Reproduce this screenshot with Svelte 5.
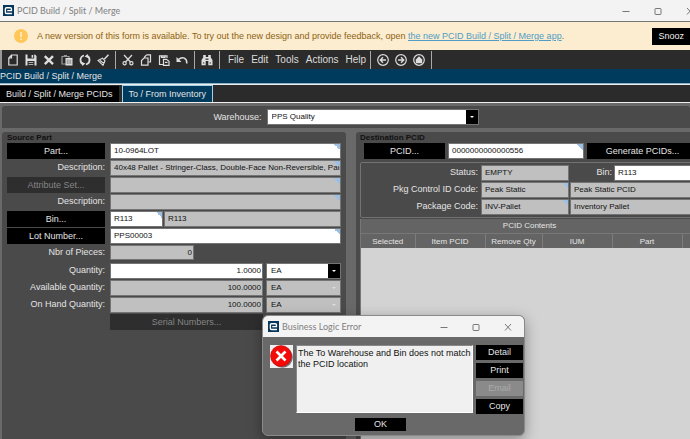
<script>
  const menus = ['File', 'Edit', 'Tools', 'Actions', 'Help'];
  const columns = ['Selected', 'Item PCID', 'Remove Qty', 'IUM', 'Part', ''];
  const amounts = [
    { id: 'qty', label: 'Quantity:', value: '1.0000', uom: 'EA', locked: false },
    { id: 'avail', label: 'Available Quantity:', value: '100.0000', uom: 'EA', locked: true },
    { id: 'onhand', label: 'On Hand Quantity:', value: '100.0000', uom: 'EA', locked: true }
  ];
</script>

{#snippet logo()}
  <svg class="logo" viewBox="0 0 12 12" aria-hidden="true">
    <rect width="12" height="12" fill="#06365a" />
    <path d="M9.8 9.3H3.9Q2.6 9.3 2.6 8V4.2Q2.6 3 3.9 3H8Q9.2 3 9.2 4.2V6.1H4.6" fill="none" stroke="#fff" stroke-width="1.5" />
  </svg>
{/snippet}

{#snippet winButtons()}
  <button aria-label="Minimize"><svg viewBox="0 0 10 10"><path d="M1.5 5.5h7" /></svg></button>
  <button aria-label="Maximize"><svg viewBox="0 0 10 10"><rect x="2" y="2.5" width="6" height="6" rx="0.6" /></svg></button>
  <button aria-label="Close"><svg viewBox="0 0 10 10"><path d="M2 2l6 6.500M8 2l-6 6.500" /></svg></button>
{/snippet}

{#snippet field(id, value, locked, lookup, extra)}
  <span class="box {extra}" class:lookup>
    <input {id} type="text" {value} readonly={locked} aria-label={id} />
  </span>
{/snippet}

<div class="window">
  <header class="titlebar">
    {@render logo()}
    <span class="title">PCID Build / Split / Merge</span>
    <div class="winbtns">{@render winButtons()}</div>
  </header>

  <div class="banner">
    <svg class="warn" viewBox="0 0 14 14" aria-hidden="true">
      <circle cx="7" cy="7" r="7" fill="#ffc757" />
      <path d="M7 3v5M7 9.500v1.700" stroke="#fcecd0" stroke-width="1.600" />
    </svg>
    <p>A new version of this form is available. To try out the new design and provide feedback, open <a href="#new">the new PCID Build / Split / Merge app</a>.</p>
    <button class="snooze">Snooz</button>
  </div>

  <nav class="toolbar">
    <button aria-label="New"><svg viewBox="0 0 12 12"><path d="M4.500 1H10.200V11H1.800V4zM4.500 1V4H1.800" /></svg></button>
    <button aria-label="Save"><svg viewBox="0 0 12 12"><path class="f" d="M.5 .5H10l1.500 1.500V11.500H.5zM2.500 .5V4.600H9.200V.5zM2.500 7V11.500H9.500V7z" fill-rule="evenodd" /><path class="f" d="M6.600 1H8.200V3.800H6.600zM3.700 8.200h4.600v.8H3.700zM3.700 10h4.600v.7H3.700z" /></svg></button>
    <button aria-label="Delete"><svg viewBox="0 0 12 12"><path d="M1.800 2.200L10 10.200M10 2.200L1.800 10.200" stroke-width="2.400" /></svg></button>
    <button aria-label="Clipboard"><svg viewBox="0 0 12 12"><path d="M1 2.500H8V10H1zM2.800 1.500h3.200" class="g" /><path class="f" d="M4.500 4H11.500V11.500H4.500z" /><path d="M6.300 5.500v4.500M8 5.500v4.500M9.700 5.500v4.500" class="g" /></svg></button>
    <button aria-label="Refresh"><svg viewBox="0 0 12 12"><path d="M5 1.500Q1.500 2.500 1.500 6T4.500 10.300M7 10.500Q10.500 9.500 10.500 6T7.500 1.700" stroke-width="1.800" /><path class="f" d="M3 8l3.400 1.500L3.200 12zM9 4L5.600 2.500 8.800 0z" /></svg></button>
    <button aria-label="Clear"><svg viewBox="0 0 12 12"><path d="M11.500 .8L7.300 5.200" stroke-width="1.500" /><path d="M1 6.500L5.500 4.200 8 6.800 6 11.300zM3 6.500l4 3" stroke-width="1.100" /></svg></button>
    <i></i>
    <button aria-label="Cut"><svg viewBox="0 0 12 12"><path d="M2 1L8.500 8M10 1L3.500 8" /><circle cx="2.600" cy="9.300" r="1.600" /><circle cx="9.400" cy="9.300" r="1.600" /></svg></button>
    <button aria-label="Copy"><svg viewBox="0 0 12 12"><path d="M6.500 .8H10.500V8H8M6.500 .8L4.500 3V4M4 4H8V11.200H1.500V6.500z" /></svg></button>
    <button aria-label="Paste"><svg viewBox="0 0 12 12"><path d="M5 10.500H1.500V1.800H9V4M3.500 1.800V3.400H7V1.800M5.500 5.300H8.500L11 7.300V11.300H5.500zM7 8.300h2.500" /></svg></button>
    <button aria-label="Undo"><svg viewBox="0 0 12 12"><path d="M2.500 5.500Q5.500 2.800 8.300 4.200T10.800 9.500" stroke-width="1.500" /><path class="f" d="M.5 3V8H5.500z" /></svg></button>
    <i></i>
    <button aria-label="Find"><svg viewBox="0 0 12 12"><path class="f" d="M2.200 1H4.800V3H7.200V1H9.800V3.500L11.500 6V11.200H7.300V7H4.700V11.200H.5V6L2.200 3.500z" /><path d="M5.200 4.500V6M6.800 4.500V6M2 9h1.300M8.700 9H10" class="d" /></svg></button>
    <i></i>
    <div class="menus">
      {#each menus as m}<button class="menu">{m}</button>{/each}
    </div>
    <i></i>
    <button aria-label="Back"><svg viewBox="0 0 12 12"><circle cx="6" cy="6" r="5.300" /><path d="M9 6H3.500M6 3.300L3.300 6 6 8.700" stroke-width="1.400" /></svg></button>
    <button aria-label="Forward"><svg viewBox="0 0 12 12"><circle cx="6" cy="6" r="5.300" /><path d="M3 6H8.500M6 3.300L8.700 6 6 8.700" stroke-width="1.400" /></svg></button>
    <button aria-label="Home"><svg viewBox="0 0 12 12"><circle cx="6" cy="6" r="5.300" /><path class="f" d="M6 2.300L9.200 5.500V9.200H2.800V5.500z" /></svg></button>
    <i></i>
  </nav>

  <h1>PCID Build / Split / Merge</h1>

  <div class="tabs">
    <button class="tab">Build / Split / Merge PCIDs</button>
    <button class="tab active">To / From Inventory</button>
  </div>

  <main>
    <section class="panel warehouse">
      <label for="wh">Warehouse:</label>
      <span class="drop wide"><select id="wh"><option>PPS Quality</option></select></span>
    </section>

    <div class="panes">
      <section class="panel source">
        <h2>Source Part</h2>
        <div class="row">
          <button class="cmd">Part...</button>
          {@render field('Part', '10-0964LOT', false, true, '')}
        </div>
        <div class="row">
          <label for="Part description">Description:</label>
          {@render field('Part description', '40x48 Pallet - Stringer-Class, Double-Face Non-Reversible, Par', true, true, '')}
        </div>
        <div class="row">
          <button class="cmd" disabled>Attribute Set...</button>
          {@render field('Attribute set', '', true, true, '')}
        </div>
        <div class="row">
          <label for="Attribute description">Description:</label>
          {@render field('Attribute description', '', true, true, '')}
        </div>
        <div class="row">
          <button class="cmd">Bin...</button>
          {@render field('Source bin', 'R113', false, true, 'bin')}
          {@render field('Source bin name', 'R113', true, false, '')}
        </div>
        <div class="row">
          <button class="cmd">Lot Number...</button>
          {@render field('Lot number', 'PPS00003', false, true, '')}
        </div>
        <div class="row">
          <label for="Pieces">Nbr of Pieces:</label>
          {@render field('Pieces', '0', true, false, 'num pieces')}
        </div>
        <div class="amounts">
          {#each amounts as a}
            <div class="row">
              <label for={a.id}>{a.label}</label>
              {@render field(a.id, a.value, a.locked, false, 'num')}
              <span class="drop" class:locked={a.locked}>
                <select aria-label="{a.label} unit" disabled={a.locked}><option>{a.uom}</option></select>
              </span>
            </div>
          {/each}
        </div>
        <div class="row">
          <span class="blank"></span>
          <button class="cmd serial" disabled>Serial Numbers...</button>
        </div>
      </section>

      <section class="panel dest">
        <h2>Destination PCID</h2>
        <div class="row pcid">
          <button class="cmd">PCID...</button>
          {@render field('PCID', '0000000000000556', false, true, '')}
          <button class="cmd gen">Generate PCIDs...</button>
        </div>
        <div class="group">
          <div class="row">
            <label for="Status">Status:</label>
            {@render field('Status', 'EMPTY', true, false, 'code')}
            <label class="binlabel" for="Destination bin">Bin:</label>
            {@render field('Destination bin', 'R113', false, true, '')}
          </div>
          <div class="row">
            <label for="Control code">Pkg Control ID Code:</label>
            {@render field('Control code', 'Peak Static', true, true, 'code')}
            {@render field('Control name', 'Peak Static PCID', true, false, '')}
          </div>
          <div class="row">
            <label for="Package code">Package Code:</label>
            {@render field('Package code', 'INV-Pallet', true, true, 'code')}
            {@render field('Package name', 'Inventory Pallet', true, false, '')}
          </div>
        </div>
        <div class="grid">
          <table>
            <caption>PCID Contents</caption>
            <thead><tr>{#each columns as c}<th>{c}</th>{/each}</tr></thead>
          </table>
        </div>
      </section>
    </div>
  </main>

  <div class="dialog" role="dialog" aria-label="Business Logic Error">
    <header>
      {@render logo()}
      <span class="title">Business Logic Error</span>
      <div class="winbtns">{@render winButtons()}</div>
    </header>
    <div class="content">
      <svg class="error" viewBox="0 0 23 23" aria-hidden="true">
        <rect width="23" height="23" fill="#f0f0f0" />
        <circle cx="12.500" cy="12.500" r="10.300" fill="#777" />
        <circle cx="11" cy="11" r="10.500" fill="#f50a0a" stroke="#a00" stroke-width=".5" />
        <path d="M6.500 6.500l9 9M15.500 6.500l-9 9" stroke="#fff" stroke-width="2.600" />
      </svg>
      <textarea readonly aria-label="Message">The To Warehouse and Bin does not match the PCID location</textarea>
      <div class="side">
        <button class="cmd">Detail</button>
        <button class="cmd">Print</button>
        <button class="cmd" disabled>Email</button>
        <button class="cmd">Copy</button>
      </div>
    </div>
    <button class="cmd ok">OK</button>
  </div>
</div>

<style>
  :global(body) { margin: 0; }
  .window, .window * { box-sizing: border-box; }
  .window {
    position: relative;
    display: flex;
    flex-direction: column;
    min-height: 100vh;
    overflow: hidden;
    background: #696969;
    color: #e4e4e4;
    font: 9px/14px "Liberation Sans", Arial, sans-serif;
  }
  button, input, select, textarea { font: inherit; margin: 0; padding: 0; border: 0; border-radius: 0; color: inherit; }
  button { background: none; white-space: nowrap; }
  svg { display: block; }

  .titlebar {
    display: flex;
    align-items: center;
    gap: 3px;
    height: 22px;
    padding-left: 3px;
    overflow: hidden;
    background: #f3f3f3;
    border-bottom: 1px solid #777;
  }
  .logo { width: 11px; height: 11px; flex: none; }
  .title { flex: 1; color: #808080; font: 9px/16px Lato, "Open Sans", sans-serif; white-space: nowrap; }
  .winbtns { display: flex; }
  .winbtns button { width: 32px; height: 20px; display: grid; place-items: center; }
  .winbtns svg { width: 10px; height: 10px; fill: none; stroke: #777; stroke-width: 1; }
  .titlebar .winbtns { margin-right: -16px; }

  .banner {
    display: flex;
    align-items: center;
    height: 28px;
    padding-left: 14px;
    overflow: hidden;
    background: #fcecd0;
    color: #8d6312;
  }
  .warn { width: 14px; height: 14px; flex: none; margin-right: 9px; }
  .banner p { flex: 1; margin: 0; white-space: nowrap; }
  .banner a { color: #4f9dc6; }
  .snooze { flex: none; height: 17px; padding: 0 6px; background: #000; color: #eee; }

  .toolbar { display: flex; align-items: center; height: 19px; padding-left: 2px; background: #2b2b2b; border-left: 2px solid #999; }
  .toolbar > button { width: 18px; height: 19px; display: grid; place-items: center; }
  .toolbar i { width: 1px; height: 18px; margin: 0 3px; background: #aaa; }
  .toolbar svg { width: 12px; height: 12px; fill: none; stroke: #dedede; stroke-width: 1.2; }
  .toolbar .f { fill: #dedede; stroke: none; }
  .toolbar .g { stroke: #999; }
  .toolbar .d { stroke: #2b2b2b; }
  .menus { display: flex; gap: 7px; padding: 0 1px 0 5px; }
  .menu { color: #ddd; font-size: 10px; }

  h1 { margin: 0; height: 15px; background: #003a5c; border-bottom: 1px solid #8db2c7; font: 9px/14px "Liberation Sans", Arial, sans-serif; }
  .tabs { display: flex; align-items: flex-end; height: 19px; background: #2b2b2b; border-top: 1px solid #eee; border-bottom: 1px solid #eee; }
  .tab { height: 16px; padding: 0 6px; margin-right: 3px; background: #000; }
  .tab.active { height: 17px; background: #003a5c; border: 1px solid #a5d1e6; border-bottom: 0; }

  main { flex: 1; display: flex; flex-direction: column; gap: 4px; padding: 3px 0 0 2px; }
  .panel { background: #4a4a4a; border-radius: 3px 3px 0 0; }
  .warehouse { display: flex; align-items: center; justify-content: center; gap: 5px; height: 22px; }
  .panes { flex: 1; display: flex; gap: 10px; }
  .source { flex: 0 0 50%; padding: 0 5px; }
  .dest { flex: 1 0 346px; display: flex; flex-direction: column; padding: 0 4px; }
  h2 { margin: 0; height: 11px; color: #111; font: bold 8px/11px "Liberation Sans", Arial, sans-serif; }

  .row { display: flex; align-items: flex-start; height: 17px; }
  .row label { flex: none; width: 98px; margin-right: 5px; text-align: right; }
  .cmd { height: 16px; background: #000; color: #e4e4e4; }
  .cmd:disabled { background: #2e2e2e; color: #858585; }
  .source .cmd { flex: none; width: 98px; margin-right: 5px; }
  .blank { width: 103px; }
  .source .serial { flex: 1; margin-right: 78px; }

  .box { position: relative; flex: 1; display: flex; height: 16px; border: 1px solid #747474; }
  .box input { width: 100%; min-width: 0; padding: 0 0 0 3px; background: #fff; color: #111; font-size: 8px; outline: 0; }
  .box input:read-only { background: #c0c0c0; }
  .lookup::after { content: ""; position: absolute; top: 0; right: 0; width: 6px; height: 6px; background: linear-gradient(45deg, transparent 50%, #9dbfe4 50%); }
  .box + .box { margin-left: 1px; }
  .bin { flex: 0 0 53px; }
  .num input { text-align: right; padding-right: 1px; }
  .pieces { flex: 0 0 84px; height: 15px; }
  .amounts { padding-top: 1px; }
  .drop { position: relative; flex: 0 0 75px; height: 16px; margin-left: 3px; border: 1px solid #747474; }
  .drop.wide { flex-basis: 212px; margin: 0; }
  .drop select { appearance: none; display: block; width: 100%; height: 100%; padding: 0 4px; background: #fff; color: #111; font-size: 8px; opacity: 1; }
  .drop.locked select { background: #c0c0c0; }
  .drop::after { content: ""; position: absolute; top: 0; right: 0; width: 12px; height: 14px; background: #000; pointer-events: none; }
  .drop::before { content: ""; position: absolute; z-index: 1; top: 6px; right: 4px; border: 2px solid transparent; border-top-color: #fff; pointer-events: none; }
  .drop.locked::after { background: none; }
  .drop.locked::before { border-top-color: #ddd; }

  .pcid { gap: 3px; padding-left: 4px; height: 19px; }
  .pcid .cmd { flex: 0 0 81px; }
  .pcid .gen { flex-basis: 111px; }
  .group { padding: 2px 0 0 2px; height: 56px; border: 1px solid #727272; border-radius: 2px; }
  .group label { width: 115px; margin-right: 3px; }
  .group .code { flex: 0 0 88px; }
  .group .binlabel { width: 43px; margin-right: 2px; }
  .grid { flex: 1; margin-top: 1px; background: #d3d3d3; border-left: 1px solid #777; }
  table { width: 100%; table-layout: fixed; border-collapse: collapse; background: #646464; font-size: 8px; }
  caption { height: 15px; line-height: 14px; background: #646464; border-bottom: 1px solid #777; }
  th { height: 14px; padding: 0; overflow: hidden; border-right: 1px solid #7c7c7c; font-weight: normal; line-height: 13px; }
  th:nth-child(1) { width: 54px; }
  th:nth-child(2), th:nth-child(4), th:nth-child(5) { width: 70px; }
  th:nth-child(3) { width: 57px; }

  .dialog {
    position: absolute;
    left: 262px;
    top: 315px;
    width: 263px;
    padding-bottom: 4px;
    overflow: hidden;
    background: #696969;
    border: 1px solid #8a8a8a;
    border-radius: 6px;
    box-shadow: 0 4px 14px rgba(0, 0, 0, 0.35);
  }
  .dialog header { display: flex; align-items: center; gap: 3px; height: 21px; padding-left: 5px; background: #f3f3f3; }
  .content { display: flex; gap: 3px; padding: 8px 1px 0 7px; }
  .error { width: 23px; height: 23px; flex: none; }
  textarea { flex: 1; min-width: 0; height: 68px; padding: 2px 1px; border: 1px solid #fff; border-top-color: #888; border-left-color: #888; background: #f0f0f0; color: #111; line-height: 11px; resize: none; overflow: hidden; outline: 0; }
  .side { display: flex; flex-direction: column; gap: 3px; width: 47px; }
  .side .cmd { height: 15px; overflow: hidden; line-height: 15px; }
  .side .cmd:disabled { background: #8a8a8a; color: #aaa; }
  .ok { display: block; width: 51px; height: 13px; margin: 4px auto 0 92px; line-height: 13px; }
</style>
